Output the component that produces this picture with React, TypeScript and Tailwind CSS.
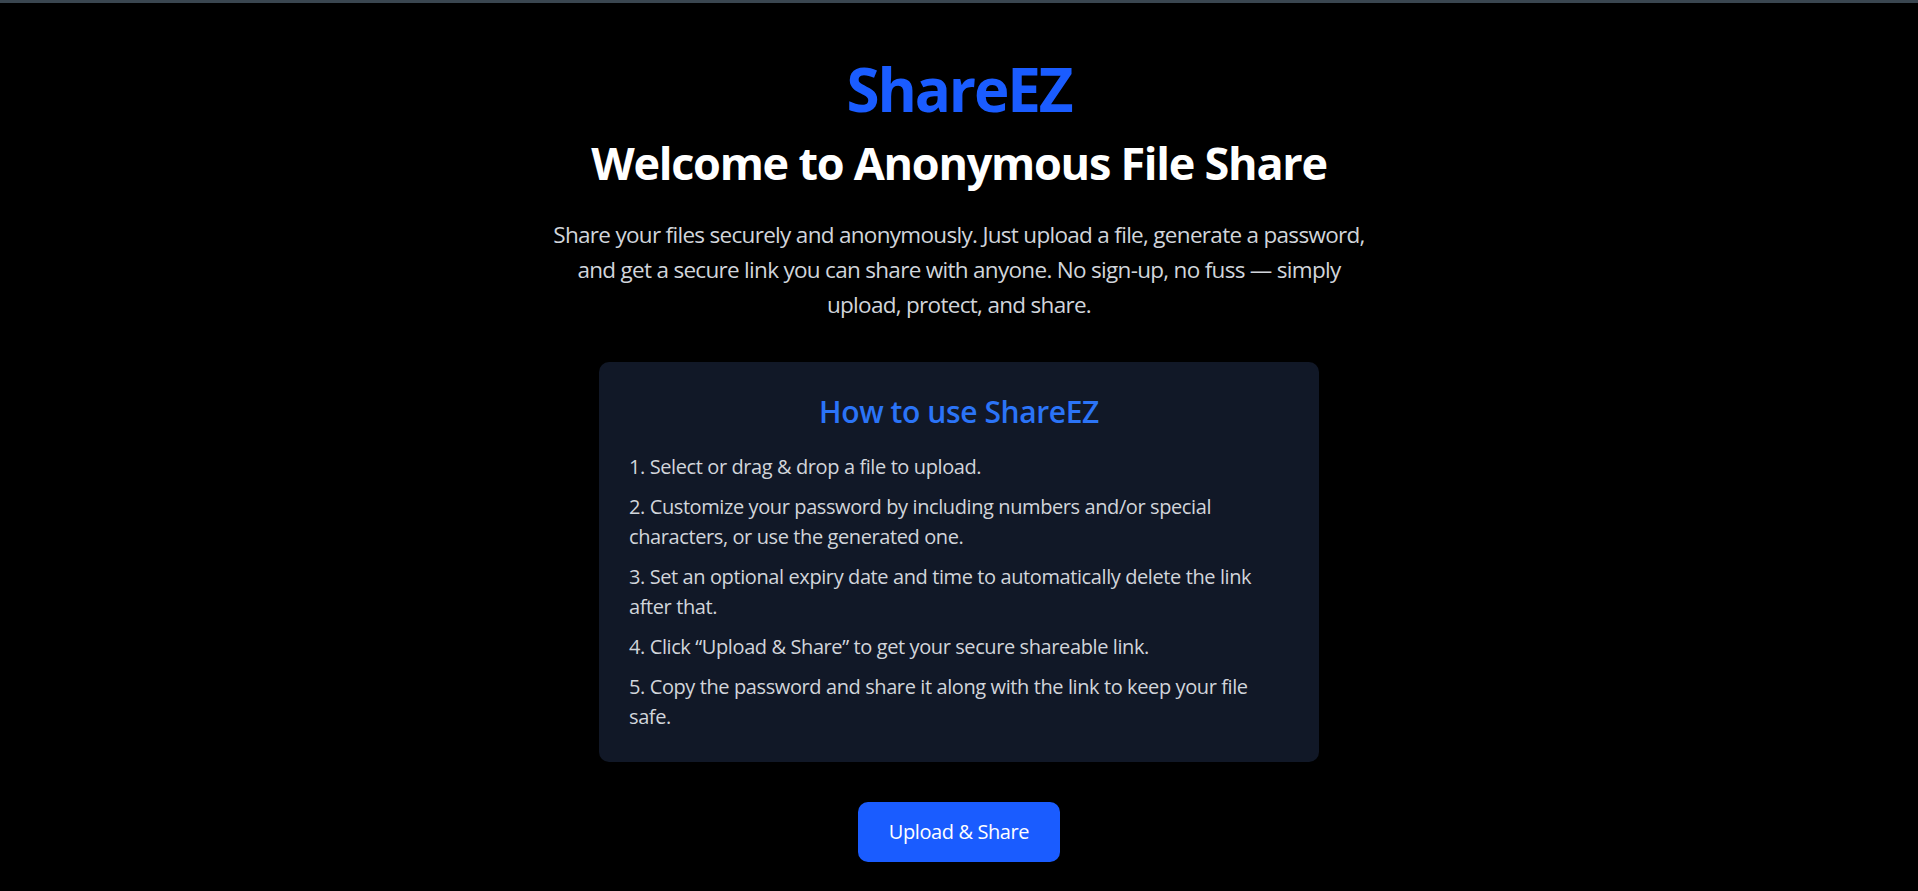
import React from 'react'

const steps = [
  '1. Select or drag & drop a file to upload.',
  '2. Customize your password by including numbers and/or special characters, or use the generated one.',
  '3. Set an optional expiry date and time to automatically delete the link after that.',
  '4. Click \u201CUpload & Share\u201D to get your secure shareable link.',
  '5. Copy the password and share it along with the link to keep your file safe.',
]

export default function App() {
  return (
    <div className="min-h-screen bg-black font-['Open_Sans','Noto_Sans',sans-serif] tracking-[-0.025em]">
      {/* barra superior */}
      <div className="h-[3px] bg-[#3a4650]" />

      <main className="flex flex-col items-center px-6 pt-[56px] pb-10 text-center">
        <h1 className="text-[60px] leading-[60px] font-bold tracking-[-0.035em] text-[#1a5cff]">ShareEZ</h1>

        <h2 className="mt-[19px] text-[45px] leading-[50px] font-bold tracking-[-0.028em] text-white">
          Welcome to Anonymous File Share
        </h2>

        <p className="mt-[29px] max-w-[840px] text-[22.5px] leading-[35px] tracking-[-0.031em] text-[#d1d5db]">
          Share your files securely and anonymously. Just upload a file, generate a password,
          and get a secure link you can share with anyone. No sign-up, no fuss — simply
          upload, protect, and share.
        </p>

        {/* Tarjeta de instrucciones */}
        <div className="mt-[40px] w-[720px] rounded-[10px] bg-[#111827] p-[30px] text-left">
          <h3 className="mb-[20px] text-center text-[30px] leading-[40px] font-semibold text-[#2b74f7]">
            How to use ShareEZ
          </h3>
          <ol className="flex flex-col gap-[10px] text-[20px] leading-[30px] text-[#d1d5db]">
            {steps.map((s) => (
              <li key={s}>{s}</li>
            ))}
          </ol>
        </div>

        <button className="mt-[40px] rounded-[10px] bg-[#1a5cff] px-[31px] py-[15px] text-[20px] leading-[30px] text-white">
          Upload &amp; Share
        </button>
      </main>
    </div>
  )
}
